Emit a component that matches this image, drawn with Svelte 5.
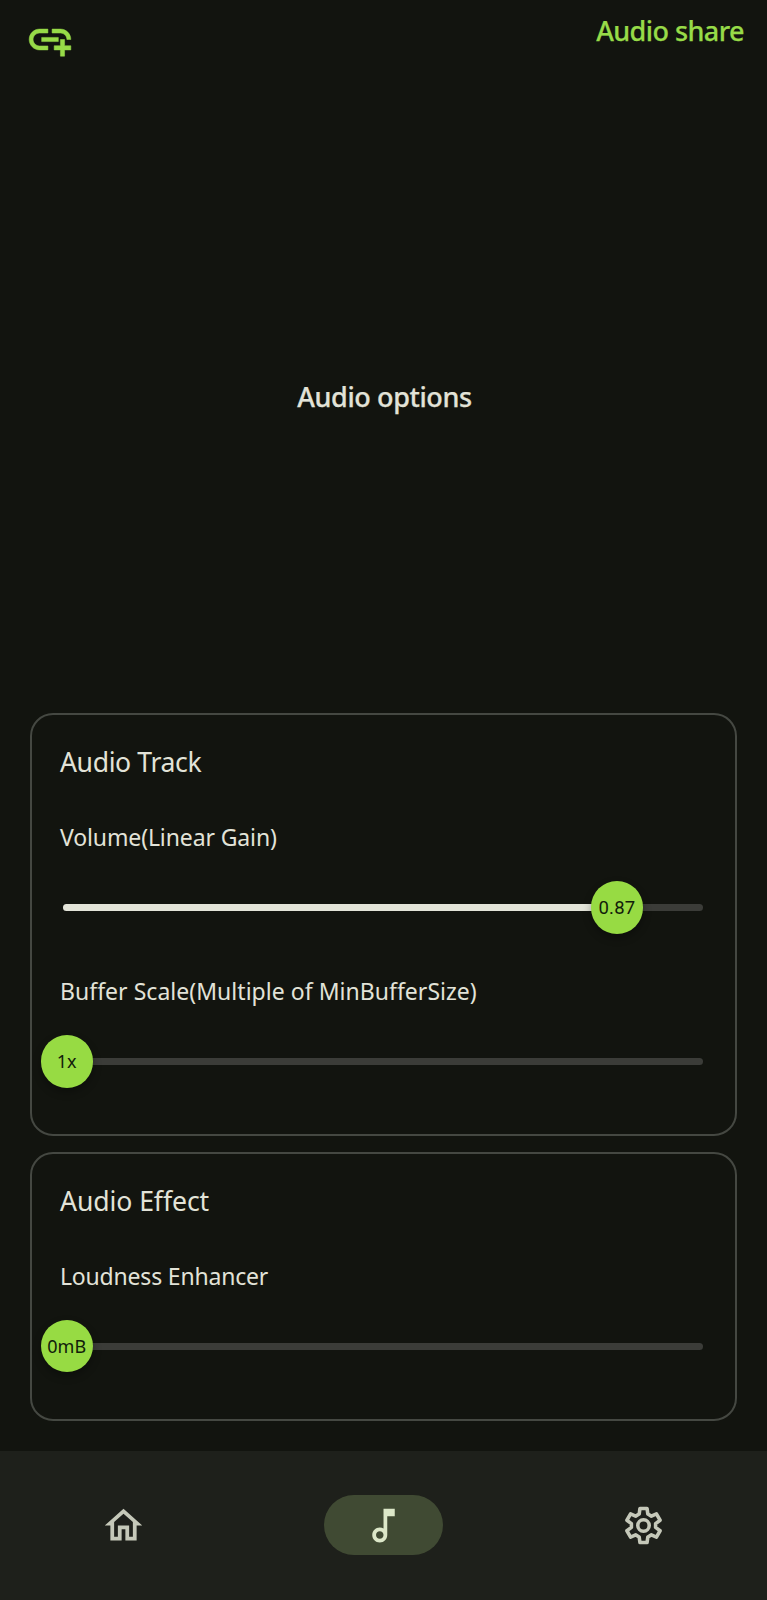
<script>
  const cards = [
    {
      title: 'Audio Track',
      spacing: -0.38,
      sliders: [
        { label: 'Volume(Linear Gain)', value: '0.87', ratio: 0.87, spacing: -0.12, digits: true },
        { label: 'Buffer Scale(Multiple of MinBufferSize)', value: '1x', ratio: 0, spacing: 0.03 }
      ]
    },
    {
      title: 'Audio Effect',
      spacing: -0.08,
      sliders: [{ label: 'Loudness Enhancer', value: '0mB', ratio: 0, spacing: -0.19 }]
    }
  ];
</script>

<div class="screen">
  <header>
    <button class="link" aria-label="Add link">
      <svg viewBox="0 0 24 24" width="50" height="51"><path d="M8 11h8v2H8v-2zm12.1 1H22c0-2.76-2.24-5-5-5h-4v1.9h4c1.71 0 3.1 1.39 3.1 3.1zM3.9 12c0-1.71 1.39-3.1 3.1-3.1h4V7H7c-2.76 0-5 2.24-5 5s2.24 5 5 5h4v-1.9H7c-1.71 0-3.1-1.39-3.1-3.1zM19 12h-2v3h-3v2h3v3h2v-3h3v-2h-3v-3z" /></svg>
    </button>
    <span class="brand">Audio share</span>
  </header>

  <section class="hero"><h1>Audio options</h1></section>

  <main>
    {#each cards as card}
      <section class="card">
        <h2 style="letter-spacing: {card.spacing}px">{card.title}</h2>
        {#each card.sliders as s}
          <h3 style="letter-spacing: {s.spacing}px">{s.label}</h3>
          <div class="slider">
            <div class="track">
              {#if s.ratio > 0}<div class="fill" style="width: {s.ratio * 100}%"></div>{/if}
            </div>
            <div class="thumb" class:digits={s.digits} style="left: {10.5 + s.ratio * 632.4}px">{s.value}</div>
          </div>
        {/each}
      </section>
    {/each}
  </main>

  <nav>
    <div class="item">
      <svg viewBox="0 0 24 24" width="45" height="45"><path d="M12 5.69l5 4.5V18h-2v-6H9v6H7v-7.81l5-4.5M12 3L2 12h3v8h6v-6h2v6h6v-8h3L12 3z" /></svg>
    </div>
    <div class="item active">
      <svg viewBox="0 0 24 24" width="45" height="45"><path d="M12 3l.01 10.55c-.59-.34-1.27-.55-2-.55C7.79 13 6 14.79 6 17s1.79 4 4.01 4S14 19.21 14 17V7h4V3h-6zm-1.99 16c-1.1 0-2-.9-2-2s.9-2 2-2 2 .9 2 2-.9 2-2 2z" /></svg>
    </div>
    <div class="item">
      <svg class="gear" viewBox="0 0 24 24" width="45" height="45">
        <path d="M10.1 2.9h3.8l.4 3 1.9 1.1 2.7-1.2 1.95 3.4-2.4 1.8v2l2.4 1.8-1.95 3.4-2.7-1.2-1.9 1.1-.4 3h-3.8l-.4-3L7.8 17l-2.7 1.2-1.95-3.4 2.4-1.8v-2l-2.4-1.8L5.1 5.8 7.8 7l1.9-1.1z" />
        <circle cx="12" cy="12" r="3.05" />
      </svg>
    </div>
  </nav>
</div>

<style>
  :global(body) { margin: 0; background: #12140f; }
  .screen {
    box-sizing: border-box;
    width: 767px;
    height: 1600px;
    display: flex;
    flex-direction: column;
    background: #12140f;
    color: #e2e3d8;
    font-family: "Noto Sans", sans-serif;
    overflow: hidden;
  }
  svg { display: block; fill: currentColor; }
  header {
    height: 80px;
    box-sizing: border-box;
    padding: 12px 23px 0 25px;
    display: flex;
    justify-content: space-between;
    align-items: flex-start;
    color: #97db48;
  }
  .link { border: 0; padding: 2px 0 0; background: none; color: inherit; }
  .link svg { stroke: currentColor; stroke-width: 0.25; }
  .brand { font-size: 27px; line-height: 37px; font-weight: 500; letter-spacing: -0.56px; -webkit-text-stroke: 0.25px currentColor; }
  .hero {
    height: 633px;
    box-sizing: border-box;
    padding-left: 2px;
    display: flex;
    align-items: center;
    justify-content: center;
  }
  h1, h2, h3 { margin: 0; white-space: nowrap; }
  h1 { font-size: 27px; line-height: 36px; font-weight: 500; letter-spacing: -0.4px; -webkit-text-stroke: 0.25px currentColor; }
  main { display: flex; flex-direction: column; gap: 15.5px; padding: 0 30px; }
  .card {
    box-sizing: border-box;
    border: 2px solid #454842;
    border-radius: 23px;
    padding: 29px 28px 46px;
  }
  h2 { font-size: 26.6px; line-height: 36px; font-weight: 400; }
  h3 { font-size: 23px; line-height: 30px; font-weight: 400; margin: 42px 0 29px; }
  .slider { position: relative; height: 53px; display: flex; align-items: center; margin-left: -30px; padding-left: 33px; }
  .track { width: 640px; height: 7px; flex: none; border-radius: 4px; background: #3b3c38; }
  .fill { height: 7px; border-radius: 4px 0 0 4px; background: #e3e4d9; }
  .thumb {
    position: absolute;
    top: 0.25px;
    width: 52.5px;
    height: 52.5px;
    border-radius: 50%;
    background: #97db43;
    box-shadow: 0 4px 8px rgba(0, 0, 0, 0.3);
    color: #11200a;
    font-size: 18px;
    line-height: 53px;
    text-align: center;
    white-space: nowrap;
  }
  .digits { font-family: Roboto, sans-serif; font-size: 18.5px; line-height: 54px; letter-spacing: 0.2px; }
  nav {
    margin-top: auto;
    height: 149px;
    box-sizing: border-box;
    padding-bottom: 1px;
    display: grid;
    grid-template-columns: repeat(3, 1fr);
    column-gap: 14px;
    align-items: center;
    background: #1e201b;
    color: #c5c8b9;
  }
  .item {
    justify-self: center;
    width: 119px;
    height: 60px;
    border-radius: 30px;
    display: flex;
    align-items: center;
    justify-content: center;
  }
  .active { background: #404a33; color: #dce7c8; }
  .gear { fill: none; stroke: currentColor; stroke-width: 1.9; stroke-linejoin: round; }
</style>
